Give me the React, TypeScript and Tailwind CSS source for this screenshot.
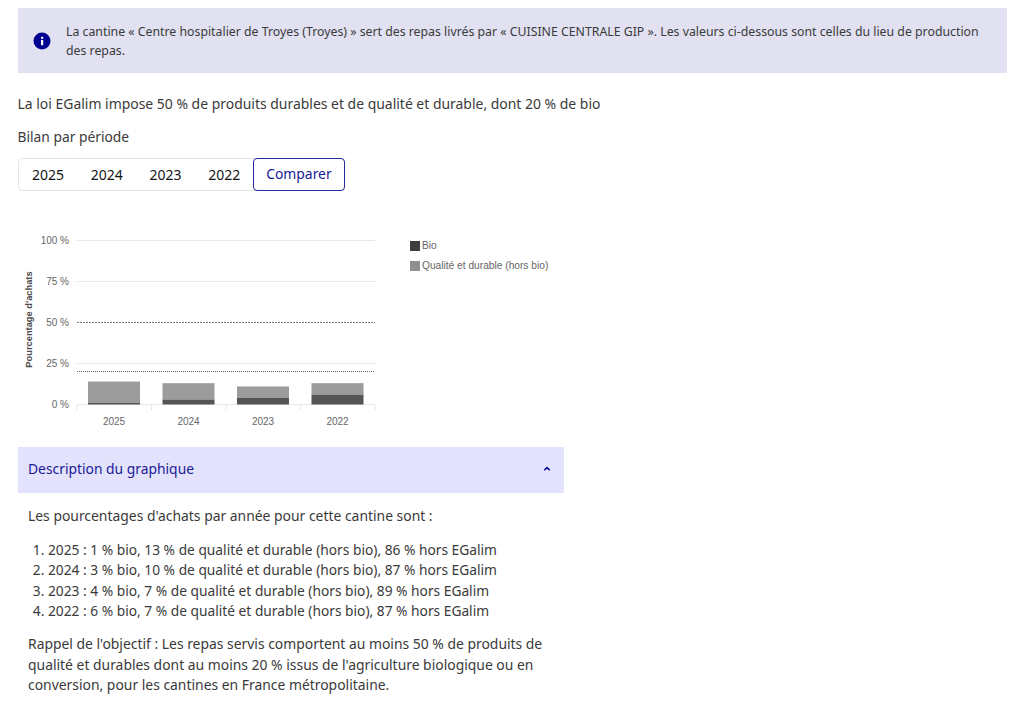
const font = { fontFamily: '"Noto Sans", sans-serif' }

const years = ['2025', '2024', '2023', '2022']

const bars = [
  { year: '2025', x: 88, bio: 1, qual: 13 },
  { year: '2024', x: 162.5, bio: 3, qual: 10 },
  { year: '2023', x: 237, bio: 4, qual: 7 },
  { year: '2022', x: 311.5, bio: 6, qual: 7 },
]

const ticks = [
  { label: '100 %', y: 240.5 },
  { label: '75 %', y: 281.5 },
  { label: '50 %', y: 322.5 },
  { label: '25 %', y: 363.5 },
  { label: '0 %', y: 404.5 },
]

const toY = (pct: number) => 404.5 - pct * 1.64

function Chart() {
  return (
    <svg width="547" height="210" viewBox="18 225 547 210" className="block" fontFamily="'Liberation Sans', sans-serif">
      {ticks.map((t) =>
        t.label === '50 %' ? (
          <g key={t.label}>
            <line x1="77" x2="375" y1={t.y} y2={t.y} stroke="#777" strokeDasharray="2 1" />
            <text x="69" y={t.y + 3.5} textAnchor="end" fontSize="10" fill="#666">{t.label}</text>
          </g>
        ) : (
          <g key={t.label}>
            <line x1="77" x2="375" y1={t.y} y2={t.y} stroke="#e8e8e8" />
            <text x="69" y={t.y + 3.5} textAnchor="end" fontSize="10" fill="#666">{t.label}</text>
          </g>
        ),
      )}
      <line x1="77" x2="375" y1="371.5" y2="371.5" stroke="#666" strokeDasharray="1 1" />
      {[77, 151.5, 226, 300.5, 375].map((x) => (
        <line key={x} x1={x} x2={x} y1="405" y2="410" stroke="#e5e5e5" />
      ))}
      {bars.map((b) => (
        <g key={b.year}>
          <rect x={b.x} y={toY(b.bio + b.qual)} width="52" height={b.qual * 1.64} fill="#9c9c9c" />
          <rect x={b.x} y={toY(b.bio)} width="52" height={b.bio * 1.64} fill="#555" />
          <text x={b.x + 26} y="425" textAnchor="middle" fontSize="10" fill="#666">{b.year}</text>
        </g>
      ))}
      <text transform="translate(32 319.5) rotate(-90)" textAnchor="middle" fontSize="9.3" fontWeight="700" fill="#4a4a4a">Pourcentage d'achats</text>
      <rect x="410" y="241" width="10" height="10" fill="#3d3d3d" />
      <text x="422" y="249" fontSize="10.2" fill="#666">Bio</text>
      <rect x="410" y="261" width="10" height="10" fill="#8f8f8f" />
      <text x="422" y="269" fontSize="10.2" fill="#666">Qualité et durable (hors bio)</text>
    </svg>
  )
}

export default function App() {
  return (
    <div className="h-[710px] overflow-hidden bg-white pl-[17.5px] pr-[17px] pt-2 text-[#3a3a3a]" style={font}>
      {/* Alerte */}
      <div className="flex h-[65px] items-center gap-[15px] bg-[#e1e1f2] py-3 pl-[15.5px] pr-5">
        <svg width="18" height="18" viewBox="0 0 18 18" className="shrink-0">
          <circle cx="9" cy="9" r="8.5" fill="#000091" />
          <rect x="8" y="8" width="2.2" height="5.2" fill="#fff" />
          <rect x="8" y="4.8" width="2.2" height="2" fill="#fff" />
        </svg>
        <p className="pt-px text-[12.3px] leading-[19.5px]">
          La cantine « Centre hospitalier de Troyes (Troyes) » sert des repas livrés par « CUISINE CENTRALE GIP ». Les valeurs ci-dessous sont celles du lieu de production des repas.
        </p>
      </div>

      <p className="mt-[21px] text-[13.95px] leading-5">La loi EGalim impose 50 % de produits durables et de qualité et durable, dont 20 % de bio</p>
      <p className="mt-[13px] text-[13.8px] leading-5">Bilan par période</p>

      {/* Périodes */}
      <div className="mt-[11px] flex h-[33px] w-fit rounded border border-[#e5e5e5]">
        {years.map((y) => (
          <button key={y} className="w-[58.8px] text-center text-sm text-[#161616]">{y}</button>
        ))}
        <button className="-m-px w-[92.5px] rounded border border-[#2a2a9e] text-[13.9px] text-[#1a1a96]">Comparer</button>
      </div>

      <div className="mt-[34px]">
        <Chart />
      </div>

      {/* Accordéon */}
      <div className="mt-[12px] w-[546.5px]">
        <button className="flex h-[46px] w-full items-center justify-between bg-[#e3e3fd] pb-0.5 pl-[10.5px] pr-[12px] text-[13.85px] text-[#1a1a96]">
          Description du graphique
          <svg width="10" height="10" viewBox="0 0 10 10">
            <path d="M2.2 6.2 5 3.6l2.8 2.6" fill="none" stroke="#000091" strokeWidth="1.5" />
          </svg>
        </button>
        <div className="px-[10.5px] pt-[13px] text-[13.9px] leading-5">
          <p>Les pourcentages d'achats par année pour cette cantine sont :</p>
          <ol className="mt-[14px] list-decimal pl-5 text-[13.75px] leading-[20.3px]">
            <li>2025 : 1 % bio, 13 % de qualité et durable (hors bio), 86 % hors EGalim</li>
            <li>2024 : 3 % bio, 10 % de qualité et durable (hors bio), 87 % hors EGalim</li>
            <li>2023 : 4 % bio, 7 % de qualité et durable (hors bio), 89 % hors EGalim</li>
            <li>2022 : 6 % bio, 7 % de qualité et durable (hors bio), 87 % hors EGalim</li>
          </ol>
          <p className="mt-[13px] leading-[20.5px]">
            Rappel de l'objectif : Les repas servis comportent au moins 50 % de produits de qualité et durables dont au moins 20 % issus de l'agriculture biologique ou en conversion, pour les cantines en France métropolitaine.
          </p>
        </div>
      </div>
    </div>
  )
}
